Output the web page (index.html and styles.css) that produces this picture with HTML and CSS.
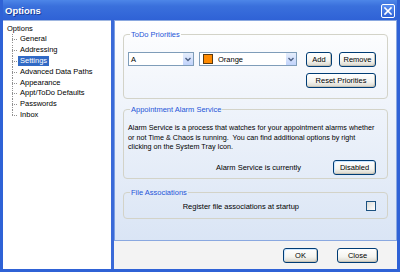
FILE: index.html
```html
<!DOCTYPE html>
<html lang="en">
<head>
    <meta charset="UTF-8">
    <title>Options</title>
    <link rel="stylesheet" href="styles.css">
</head>
<body>
    <div class="window">
        <div class="titlebar">
            <span class="title">Options</span>
            <button class="close-x" aria-label="Close">
                <svg viewBox="0 0 10 10" width="10" height="10">
                    <path d="M2 2 L8 8 M8 2 L2 8" stroke="#fff" stroke-width="1.6" stroke-linecap="square"></path>
                </svg>
            </button>
        </div>

        <div class="client">
            <div class="tree">
                <div class="root">Options</div>
                <ul>
                    <li><span>General</span></li>
                    <li><span>Addressing</span></li>
                    <li><span class="selected">Settings</span></li>
                    <li><span>Advanced Data Paths</span></li>
                    <li><span>Appearance</span></li>
                    <li><span>Appt/ToDo Defaults</span></li>
                    <li><span>Passwords</span></li>
                    <li><span>Inbox</span></li>
                </ul>
            </div>

            <div class="main">
                <div class="pane">
                    <fieldset class="group priorities">
                        <legend>ToDo Priorities</legend>
                        <div class="combos">
                            <div class="combo combo-a">
                                <span class="value">A</span>
                                <span class="drop"></span>
                            </div>
                            <div class="combo combo-color">
                                <span class="swatch"></span>
                                <span class="value">Orange</span>
                                <span class="drop"></span>
                            </div>
                        </div>
                        <div class="prio-buttons">
                            <div class="btn-row">
                                <button class="btn btn-add">Add</button>
                                <button class="btn btn-remove">Remove</button>
                            </div>
                            <button class="btn btn-reset">Reset Priorities</button>
                        </div>
                    </fieldset>

                    <fieldset class="group alarm">
                        <legend>Appointment Alarm Service</legend>
                        <p class="desc">Alarm Service is a process that watches for your appointment alarms whether or not Time &amp; Chaos is running.&nbsp; You can find additional options by right<br>clicking on the System Tray Icon.</p>
                        <div class="row">
                            <span class="row-label">Alarm Service is currently</span>
                            <button class="btn btn-disabled">Disabled</button>
                        </div>
                    </fieldset>

                    <fieldset class="group files">
                        <legend>File Associations</legend>
                        <div class="row">
                            <span class="row-label">Register file associations at startup</span>
                            <span class="check"></span>
                        </div>
                    </fieldset>
                </div>

                <div class="footer">
                    <button class="btn btn-ok">OK</button>
                    <button class="btn btn-close">Close</button>
                </div>
            </div>
        </div>
    </div>
</body>
</html>
```

FILE: styles.css
```css
* {
    margin: 0;
    padding: 0;
    box-sizing: border-box;
}

body {
    width: 400px;
    height: 272px;
    overflow: hidden;
    font-family: "Liberation Sans", Arial, sans-serif;
    font-size: 7.5px;
    color: #000;
    background: #fff;
}

.window {
    display: flex;
    flex-direction: column;
    height: 272px;
    background: #2f62d6;
    padding: 0 3px 3px;
}

/* title bar */
.titlebar {
    height: 20px;
    display: flex;
    align-items: center;
    justify-content: space-between;
    padding: 0 2px 0 2px;
    background: linear-gradient(#4d86e8 0%, #3a70dc 30%, #2f62d6 100%);
}

.title {
    color: #fff;
    font-weight: bold;
    font-size: 9.5px;
    text-shadow: 1px 1px 0 #1a3c95;
    padding-top: 1px;
}

.close-x {
    width: 14px;
    height: 14px;
    display: flex;
    align-items: center;
    justify-content: center;
    border: 1px solid #fff;
    border-radius: 2px;
    background: linear-gradient(#5a8ff0, #2f62d6);
    margin-top: 1px;
}

/* client area */
.client {
    flex: 1;
    display: flex;
    min-height: 0;
}

.tree {
    width: 108px;
    background: #fff;
    padding: 2px 0 0 4px;
    border-top: 1px solid #9fb6e0;
}

.root {
    height: 11px;
    line-height: 11px;
}

.tree ul {
    list-style: none;
}

.tree li {
    height: 10.9px;
    line-height: 10.9px;
    padding-left: 11px;
    background:
        repeating-linear-gradient(to right, #909090 0 1px, transparent 1px 2px) 5px 5px / 6px 1px no-repeat,
        repeating-linear-gradient(to bottom, #909090 0 1px, transparent 1px 2px) 5px 0 / 1px 100% no-repeat;
}

.tree li:first-child {
    background:
        repeating-linear-gradient(to right, #909090 0 1px, transparent 1px 2px) 5px 5px / 6px 1px no-repeat,
        repeating-linear-gradient(to bottom, #909090 0 1px, transparent 1px 2px) 5px -2px / 1px 100% no-repeat;
}

.tree li:last-child {
    background:
        repeating-linear-gradient(to right, #909090 0 1px, transparent 1px 2px) 5px 5px / 6px 1px no-repeat,
        repeating-linear-gradient(to bottom, #909090 0 1px, transparent 1px 2px) 5px 0 / 1px 6px no-repeat;
}

.tree li span {
    display: inline-block;
    padding: 0 2px;
    line-height: 10px;
}

.tree li span.selected {
    background: #316ac5;
    color: #fff;
}

.main {
    flex: 1;
    display: flex;
    flex-direction: column;
    border-left: 3px solid #3a6ad8;
    background: #f3f3f3;
}

.pane {
    flex: 1;
    padding: 9px 8px 0;
    border: 1px solid #8aa8e0;
    border-left-color: #7a9ee4;
    background: linear-gradient(#ffffff 0%, #f4f7fc 25%, #dae5f5 100%);
    display: flex;
    flex-direction: column;
    gap: 6px;
}

/* group boxes */
.group {
    border: 1px solid #d3d3c8;
    border-radius: 4px;
    padding: 0 11px 0 4px;
}

.group legend {
    color: #1f55d8;
    padding: 0 1px;
    margin-left: 2px;
    line-height: 9px;
}

.priorities {
    height: 69px;
    display: flex;
    align-items: flex-start;
    padding-top: 13px;
}

.combos {
    display: flex;
    gap: 5px;
}

.combo {
    height: 14px;
    background: #fff;
    border: 1px solid #7f9db9;
    display: flex;
    align-items: center;
    padding-left: 2px;
}

.combo .value {
    flex: 1;
}

.combo-a {
    width: 66px;
}

.combo-color {
    width: 98px;
}

.swatch {
    width: 10px;
    height: 10px;
    background: #ff8a00;
    border: 1px solid #5a3a10;
    margin: 0 5px 0 1px;
}

.drop {
    width: 11px;
    height: 12px;
    margin-right: 0;
    background:
        url("data:image/svg+xml,%3Csvg xmlns='http://www.w3.org/2000/svg' width='11' height='12'%3E%3Cpath d='M3 5 L5.5 7.5 L8 5' stroke='%234d6185' stroke-width='1.4' fill='none'/%3E%3C/svg%3E") center / 11px 12px no-repeat,
        linear-gradient(#e6eefc, #c1d3fb);
    border-left: 1px solid #fff;
}

.prio-buttons {
    margin-left: auto;
    display: flex;
    flex-direction: column;
    gap: 6px;
}

.btn-row {
    display: flex;
    gap: 7px;
}

/* xp style buttons */
.btn {
    font-family: "Liberation Sans", Arial, sans-serif;
    font-size: 7.5px;
    color: #000;
    height: 15px;
    border: 1px solid #003c74;
    border-radius: 3px;
    background: linear-gradient(#ffffff 0%, #f4f4f0 60%, #d9d6cb 100%);
    box-shadow: inset -1px -1px 0 #c8c4b8;
}

.btn-add {
    width: 26px;
}

.btn-remove {
    width: 37px;
}

.btn-reset {
    width: 70px;
}

.alarm {
    height: 74px;
    padding-top: 9px;
}

.desc {
    font-size: 7.2px;
    line-height: 9.5px;
    margin-right: -6px;
}

.row {
    display: flex;
    align-items: center;
}

.row-label {
    width: 173px;
    text-align: right;
}

.alarm .row {
    margin-top: 8px;
}

.btn-disabled {
    width: 43px;
    margin-left: auto;
    box-shadow: inset -1px -1px 0 #c8c4b8, inset 1px 1px 0 #cee7ff;
}

.files {
    height: 31px;
    padding-top: 4px;
    margin-top: 3px;
}

.files .row-label {
    width: 171px;
}

.check {
    width: 10px;
    height: 10px;
    margin-left: auto;
    border: 1px solid #1c5180;
    background: linear-gradient(135deg, #dcdcd7, #ffffff);
}

.footer {
    height: 28px;
    display: flex;
    align-items: center;
    justify-content: flex-end;
    gap: 19px;
    padding: 1px 19px 0 0;
    background: #f3f3f3;
}

.btn-ok {
    width: 35px;
    box-shadow: inset -1px -1px 0 #c8c4b8, inset 1px 1px 0 #cee7ff;
}

.btn-close {
    width: 41px;
}
```
